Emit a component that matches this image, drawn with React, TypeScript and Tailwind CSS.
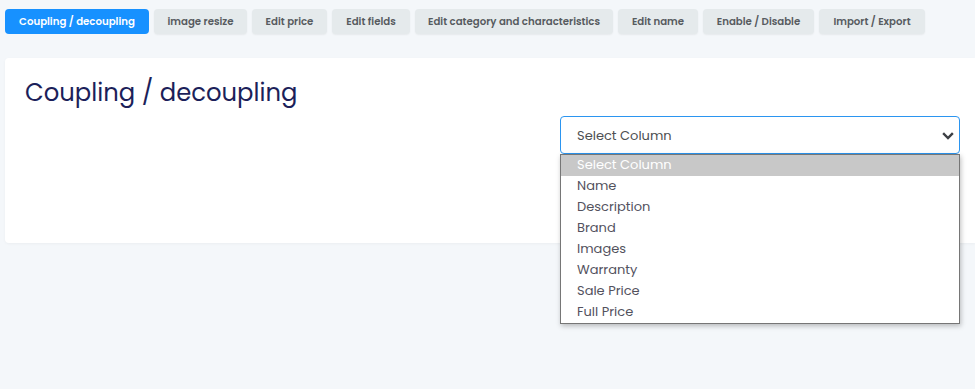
const tabs = [
  { label: "Coupling / decoupling", w: "w-[144px]", active: true },
  { label: "image resize", w: "w-[93px]" },
  { label: "Edit price", w: "w-[75px]" },
  { label: "Edit fields", w: "w-[78px]" },
  { label: "Edit category and characteristics", w: "w-[198px]" },
  { label: "Edit name", w: "w-[80px]" },
  { label: "Enable / Disable", w: "w-[111px]" },
  { label: "Import / Export", w: "w-[106px]" },
];

const columns = [
  "Select Column",
  "Name",
  "Description",
  "Brand",
  "Images",
  "Warranty",
  "Sale Price",
  "Full Price",
];

export default function App() {
  return (
    <div className="w-[975px] h-[389px] overflow-hidden bg-[#f4f7fa] font-['Poppins','Open_Sans',sans-serif]">
      <div className="flex gap-[5px] pl-[5px] pt-[9px]">
        {tabs.map((t) => (
          <button
            key={t.label}
            className={`${t.w} h-[25px] rounded-[4px] text-[10.2px] font-semibold whitespace-nowrap ${
              t.active
                ? "bg-[#1791ff] text-white"
                : "bg-[#e5eaec] text-[#575b5f] shadow-[0_1px_2px_rgba(0,0,0,0.06)]"
            }`}
          >
            {t.label}
          </button>
        ))}
      </div>

      <div className="ml-[5px] mt-[24px] h-[185px] rounded-l-[4px] bg-white shadow-[0_1px_3px_rgba(0,0,0,0.04)] pl-[20px] pt-[18px]">
        <h1 className="text-[24.3px] leading-[34px] text-[#1c1f5a]">
          Coupling / decoupling
        </h1>
        <div className="ml-[535px] mt-[6px] relative w-[400px]">
          <div className="h-[38px] rounded-[4px] border border-[#2b95f0] flex items-center justify-between pl-[16px] pr-[5px] pt-[2px] text-[13px] text-[#4d4f52]">
            <span>Select Column</span>
            <svg width="12" height="8" viewBox="0 0 12 8" fill="none">
              <path d="M2 2 6 6l4-4" stroke="#3c3f44" strokeWidth="2.4" strokeLinecap="square" />
            </svg>
          </div>
          <ul className="absolute left-0 top-[38px] w-[400px] bg-white border border-[#767676] shadow-[1px_2px_5px_rgba(0,0,0,0.25)] z-10">
            {columns.map((c, i) => (
              <li
                key={c}
                className={`h-[21px] leading-[20px] pl-[16px] text-[13px] ${
                  i === 0 ? "bg-[#c8c8c8] text-white" : "text-[#53525e]"
                }`}
              >
                {c}
              </li>
            ))}
          </ul>
        </div>
      </div>
    </div>
  );
}
